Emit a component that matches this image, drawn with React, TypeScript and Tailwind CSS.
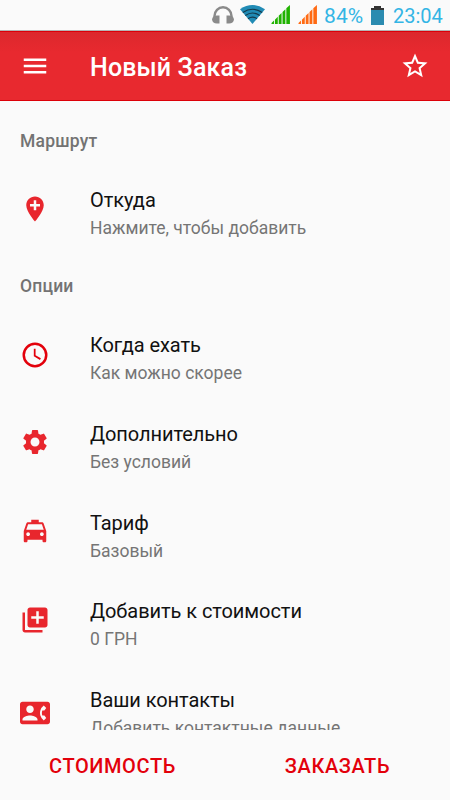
import type { IconType } from "react-icons";
import {
  MdAddToPhotos,
  MdContactPhone,
  MdLocalTaxi,
  MdMenu,
  MdSettings,
  MdStarBorder,
} from "react-icons/md";

type Option = {
  icon: IconType;
  iconClass: string;
  title: string;
  hint: string;
};

function PinPlusIcon({ className }: { className?: string }) {
  return (
    <svg viewBox="0 0 24 24" fill="currentColor" className={className}>
      <path d="M12 2C8.14 2 5 5.14 5 9c0 5.25 7 13 7 13s7-7.75 7-13c0-3.86-3.14-7-7-7zm4 8h-3v3h-2v-3H8V8h3V5h2v3h3v2z" />
    </svg>
  );
}

function ClockIcon({ className }: { className?: string }) {
  return (
    <svg viewBox="0 0 24 24" fill="none" stroke="currentColor" className={className}>
      <circle cx="12" cy="12" r="9" strokeWidth="2" />
      <path d="M11.75 7v5.6l4.6 2.7" strokeWidth="1.4" />
    </svg>
  );
}

const route: Option[] = [
  {
    icon: PinPlusIcon,
    iconClass: "mt-[22.5px]",
    title: "Откуда",
    hint: "Нажмите, чтобы добавить",
  },
];

const options: Option[] = [
  {
    icon: ClockIcon,
    iconClass: "mt-[24px] text-[#e3000b]",
    title: "Когда ехать",
    hint: "Как можно скорее",
  },
  { icon: MdSettings, iconClass: "mt-[22.5px]", title: "Дополнительно", hint: "Без условий" },
  { icon: MdLocalTaxi, iconClass: "mt-[22.5px]", title: "Тариф", hint: "Базовый" },
  { icon: MdAddToPhotos, iconClass: "mt-[22.5px]", title: "Добавить к стоимости", hint: "0 ГРН" },
  {
    icon: MdContactPhone,
    iconClass: "mt-[26.5px]",
    title: "Ваши контакты",
    hint: "Добавить контактные данные",
  },
];

function Signal({ className }: { className: string }) {
  return (
    <svg viewBox="0 0 20 20" fill="currentColor" className={className}>
      <path d="M0 20v-1l2.600-2.600V20zM3.600 20v-4.600l3-3V20zM7.600 20v-8.600l3-3V20zM11.600 20V7.400l3-3V20zM15.600 20V3.400L19.400 0v20z" />
    </svg>
  );
}

function StatusBar() {
  return (
    <div className="flex h-[31px] shrink-0 items-start border-b border-[#b5b5b5] pl-[212px] text-[#33b5e5]">
      <svg viewBox="0 0 22 18" className="mt-[6px] h-[18px] w-[22px] shrink-0">
        <path d="M2.500 11V10a8.500 8.700 0 0 1 17 0v1" fill="none" stroke="#8a8a8a" strokeWidth="2.400" />
        <path
          d="M7.500 9.500v8H5A5 4.600 0 0 1 0 13.500a5 4.600 0 0 1 5-4zM14.500 9.500v8H17a5 4.600 0 0 0 5-4a5 4.600 0 0 0-5-4z"
          fill="#8a8a8a"
        />
      </svg>
      <svg viewBox="0 0 25 19" className="mt-[5px] ml-[6px] h-[19px] w-[25px] shrink-0">
        <path d="M0 4.200Q12.500-4.200 25 4.200L12.500 19z" fill="#218bb5" />
        <g fill="none" stroke="#143a4c" strokeWidth="1.100">
          <path d="M2.800 7.500Q12.500 1 22.200 7.500M5.300 10.500Q12.500 5.500 19.700 10.500M8 13.700Q12.500 10.500 17 13.700" />
        </g>
      </svg>
      <Signal className="mt-[5px] ml-[6px] h-[19px] w-[20px] shrink-0 text-[#20b200]" />
      <Signal className="mt-[5px] ml-[7px] h-[19px] w-[20px] shrink-0 text-[#ff6a13]" />
      <span className="mt-[4px] ml-[6px] w-[47px] text-[21px] leading-6 tracking-[0.1px] whitespace-nowrap">
        84%
      </span>
      <svg viewBox="0 0 13 19" className="mt-[6px] h-[19px] w-[13px] shrink-0">
        <path d="M3 0h7v2h3v2H0V2h3z" fill="#333" />
        <path d="M0 4h13v15H0z" fill="#2b8bb0" />
      </svg>
      <span className="mt-[4px] ml-[9px] text-[20px] leading-6 whitespace-nowrap">23:04</span>
    </div>
  );
}

function SectionLabel({ children }: { children: string }) {
  return (
    <h2 className="h-[70px] pt-[30px] pl-5 text-[17.5px] leading-5 font-medium tracking-[0.2px] text-[#737373]">
      {children}
    </h2>
  );
}

function OptionRow({ option }: { option: Option }) {
  const Icon = option.icon;
  return (
    <button className="flex h-[75px] w-full shrink-0 items-start px-5 text-left whitespace-nowrap">
      <Icon className={`size-[30px] shrink-0 ${option.iconClass}`} />
      <span className="ml-10 flex flex-col pt-[17px]">
        <span className="text-[20px] leading-6 tracking-[-0.06px] text-[#111]">{option.title}</span>
        <span className="mt-1 text-[17.5px] leading-6 text-[#757575]">{option.hint}</span>
      </span>
    </button>
  );
}

export default function App() {
  return (
    <div className="flex h-[800px] w-[450px] flex-col overflow-hidden bg-[#fafafa] font-['Roboto',sans-serif] text-[#e8262d]">
      <StatusBar />
      <header className="flex h-[70px] shrink-0 items-center border-y border-[#dc0009] bg-[#e8292f] bg-linear-to-b from-[#dc282d] to-[#e8292f] to-30% px-5 text-white">
        <MdMenu className="size-[30px] shrink-0" />
        <h1 className="ml-10 flex-1 pt-1 text-[25px] leading-8 font-medium tracking-[0.15px]">
          Новый Заказ
        </h1>
        <MdStarBorder className="size-[30px] shrink-0" />
      </header>
      <main className="min-h-0 flex-1 overflow-hidden">
        <SectionLabel>Маршрут</SectionLabel>
        {route.map((option) => (
          <OptionRow key={option.title} option={option} />
        ))}
        <SectionLabel>Опции</SectionLabel>
        <div className="flex flex-col gap-[13.75px]">
          {options.map((option) => (
            <OptionRow key={option.title} option={option} />
          ))}
        </div>
      </main>
      <footer className="grid h-[70px] shrink-0 grid-cols-2 pt-px text-[20px] font-medium tracking-[0.6px] text-[#e3000b]">
        <button>СТОИМОСТЬ</button>
        <button>ЗАКАЗАТЬ</button>
      </footer>
    </div>
  );
}
